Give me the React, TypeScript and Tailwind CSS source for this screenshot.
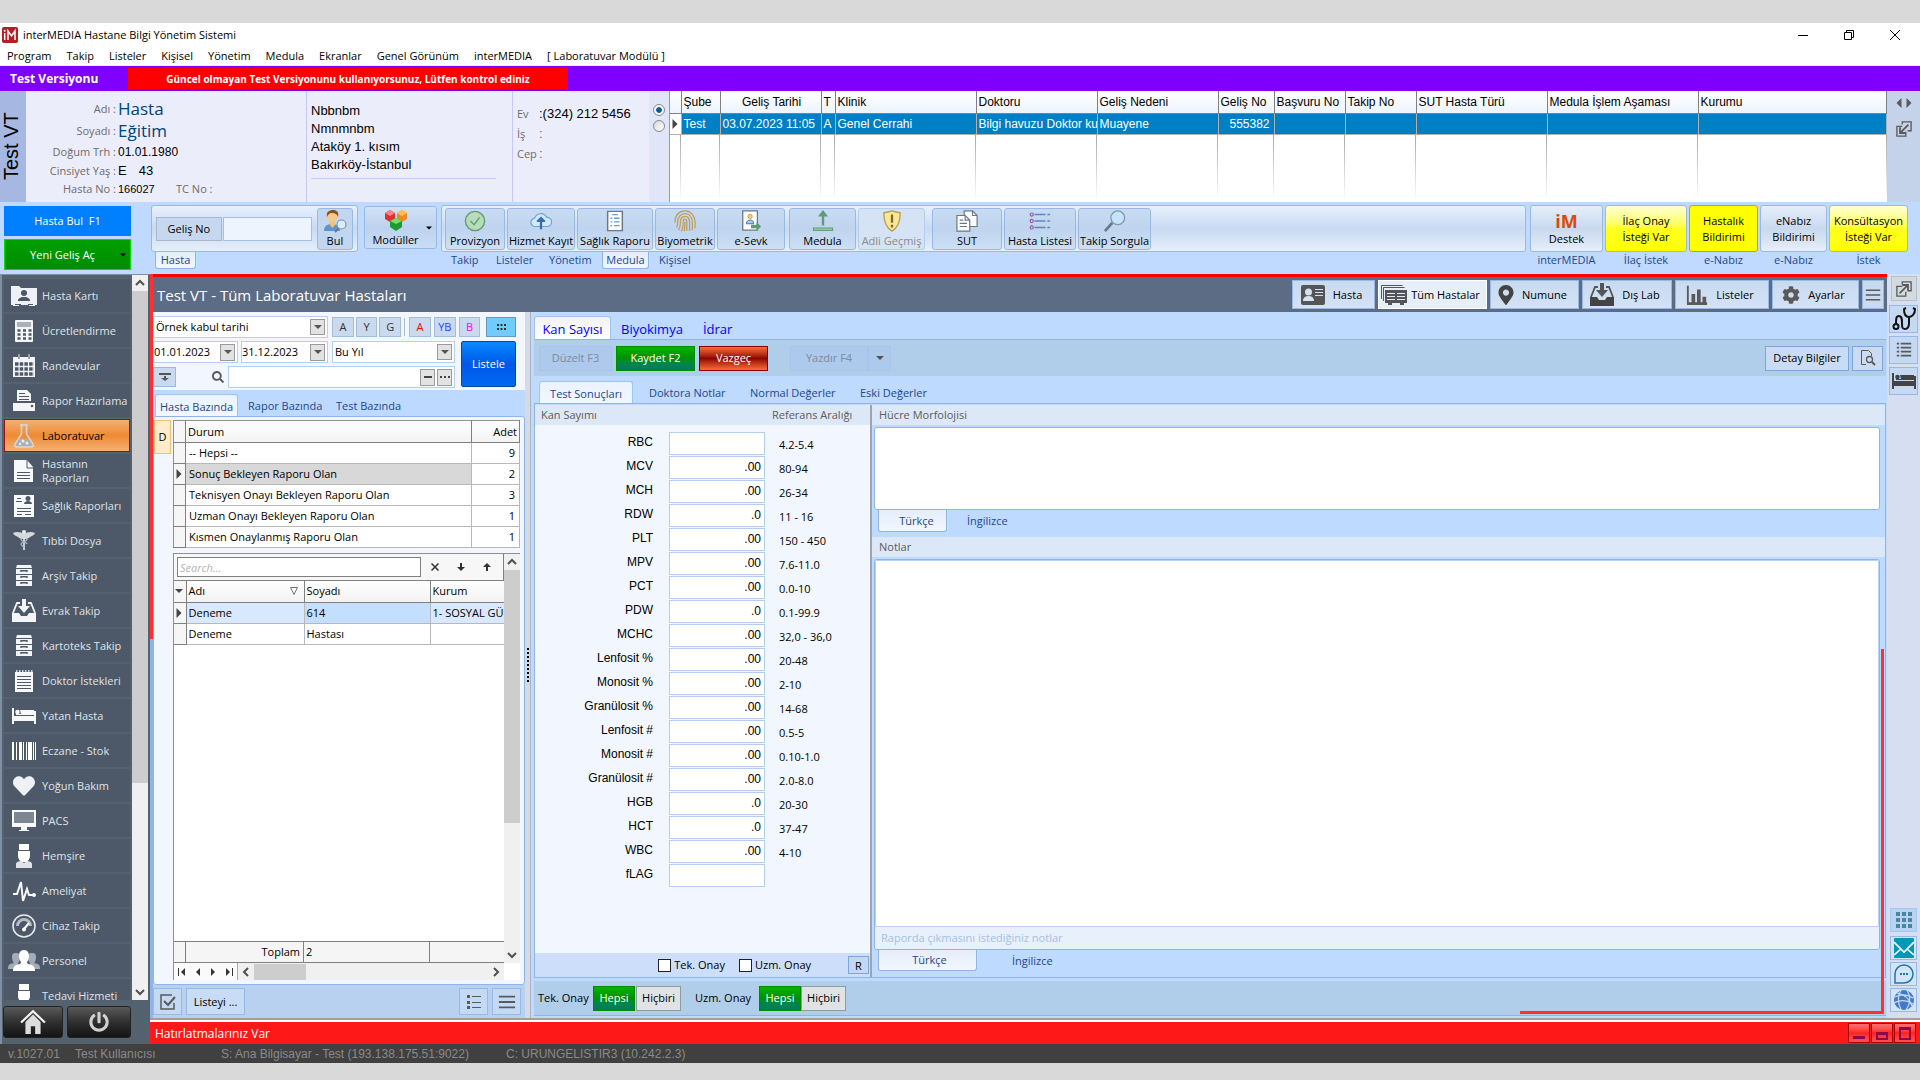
import { ReactNode, useState } from "react";
import clsx from "clsx";
import { FaCog, FaHeart, FaMapMarkerAlt, FaPowerOff, FaSearch } from "react-icons/fa";

const MENU = [
  "Program",
  "Takip",
  "Listeler",
  "Kişisel",
  "Yönetim",
  "Medula",
  "Ekranlar",
  "Genel Görünüm",
  "interMEDIA",
  "[ Laboratuvar Modülü ]",
];

const VISIT_COLUMNS = [
  { title: "", width: "w-[11px]" },
  { title: "Şube", width: "w-[39px]" },
  { title: "Geliş Tarihi", width: "w-[101px]" },
  { title: "T", width: "w-[14px]" },
  { title: "Klinik", width: "w-[141px]" },
  { title: "Doktoru", width: "w-[121px]" },
  { title: "Geliş Nedeni", width: "w-[121px]" },
  { title: "Geliş No", width: "w-[56px]" },
  { title: "Başvuru No", width: "w-[71px]" },
  { title: "Takip No", width: "w-[71px]" },
  { title: "SUT Hasta Türü", width: "w-[131px]" },
  { title: "Medula İşlem Aşaması", width: "w-[151px]" },
  { title: "Kurumu", width: "" },
];

const VISIT = ["", "Test", "03.07.2023 11:05", "A", "Genel Cerrahi", "Bilgi havuzu Doktor ku", "Muayene", "555382", "", "", "", "", ""];

const TESTS = [
  { name: "RBC", value: "", range: "4.2-5.4" },
  { name: "MCV", value: ".00", range: "80-94" },
  { name: "MCH", value: ".00", range: "26-34" },
  { name: "RDW", value: ".0", range: "11 - 16" },
  { name: "PLT", value: ".00", range: "150 - 450" },
  { name: "MPV", value: ".00", range: "7.6-11.0" },
  { name: "PCT", value: ".00", range: "0.0-10" },
  { name: "PDW", value: ".0", range: "0.1-99.9" },
  { name: "MCHC", value: ".00", range: "32,0 - 36,0" },
  { name: "Lenfosit %", value: ".00", range: "20-48" },
  { name: "Monosit %", value: ".00", range: "2-10" },
  { name: "Granülosit %", value: ".00", range: "14-68" },
  { name: "Lenfosit #", value: ".00", range: "0.5-5" },
  { name: "Monosit #", value: ".00", range: "0.10-1.0" },
  { name: "Granülosit #", value: ".00", range: "2.0-8.0" },
  { name: "HGB", value: ".0", range: "20-30" },
  { name: "HCT", value: ".0", range: "37-47" },
  { name: "WBC", value: ".00", range: "4-10" },
  { name: "fLAG", value: "", range: "" },
];

const STATUS_ROWS = [
  { name: "-- Hepsi --", count: 9 },
  { name: "Sonuç Bekleyen Raporu Olan", count: 2 },
  { name: "Teknisyen Onayı Bekleyen Raporu Olan", count: 3 },
  { name: "Uzman Onayı Bekleyen Raporu Olan", count: 1 },
  { name: "Kısmen Onaylanmış Raporu Olan", count: 1 },
];

/* ---------- icons ---------- */

function Svg({ children, className = "size-6", box = "0 0 24 24" }: { children: ReactNode; className?: string; box?: string }) {
  return (
    <svg viewBox={box} className={clsx("shrink-0", className)} fill="none" aria-hidden="true">
      {children}
    </svg>
  );
}

function Triangle({ dir = "down", className = "size-2" }: { dir?: "down" | "up" | "left" | "right"; className?: string }) {
  const d = { down: "M0 2h8L4 6z", up: "M0 6h8L4 2z", left: "M6 0v8L2 4z", right: "M2 0v8l4-4z" }[dir];
  return (
    <Svg box="0 0 8 8" className={className}>
      <path d={d} fill="currentColor" />
    </Svg>
  );
}

function Chevron({ dir, className = "size-2.5" }: { dir: "down" | "up" | "left" | "right"; className?: string }) {
  const d = { down: "M1 3l4 4 4-4", up: "M1 7l4-4 4 4", left: "M7 1L3 5l4 4", right: "M3 1l4 4-4 4" }[dir];
  return (
    <Svg box="0 0 10 10" className={className}>
      <path d={d} stroke="#505050" strokeWidth="2" />
    </Svg>
  );
}

const CabinetIcon = () => (
  <Svg>
    <path fill="#f3f5f8" d="M5 1h14l1 3v18H4V4z" />
    <path stroke="#4d5968" strokeWidth="1" d="M4 4.5h16M4 10.500h16M4 16.500h16" />
    <path stroke="#4d5968" strokeWidth="1.400" d="M9 8V6.700h6V8M9 14v-1.300h6V14M9 20v-1.300h6V20" />
  </Svg>
);

const NurseIcon = () => (
  <Svg>
    <path fill="#fff" d="M7 0h10v6H7zM6 7h12v5c0 3-2 5-3.500 6h-5C8 17 6 15 6 12z" />
    <path fill="#dfe3e8" d="M4 24v-4c0-2 3-3 5-3l3 2 3-2c2 0 5 1 5 3v4z" />
  </Svg>
);

const InboxIcon = ({ dark = false }: { dark?: boolean }) => (
  <Svg>
    <path fill={dark ? "#444" : "#f3f5f8"} d="M0 14h7l2 3h6l2-3h7v9H0z" />
    <path stroke={dark ? "#555" : "#f3f5f8"} strokeWidth="1.800" d="M1 14L5 4h3M23 14L19 4h-3" />
    <path fill={dark ? "#555" : "#f3f5f8"} d="M10 0h4v7h4l-6 7-6-7h4z" />
  </Svg>
);

const BedIcon = ({ dark = false }: { dark?: boolean }) => (
  <Svg>
    <path fill={dark ? "#444" : "#f8f9fb"} d="M0 4h2v8h20V7h2v13h-2v-3H2v3H0z" />
    <circle cx="5.500" cy="8" r="2.300" fill={dark ? "#444" : "#f8f9fb"} />
    <path fill={dark ? "#444" : "#f8f9fb"} d="M8 6h14v5H4v-1h5z" />
    <path stroke={dark ? "#c5d9f2" : "#4d5968"} strokeWidth=".8" d="M2 11.500h20" />
  </Svg>
);

const BarsIcon = ({ className = "size-5" }: { className?: string }) => (
  <Svg box="0 0 20 20" className={className}>
    <path stroke="#5a5a5a" strokeWidth="2" d="M1 4h18M1 10h18M1 16h18" />
  </Svg>
);

const ListIcon = () => (
  <Svg box="0 0 20 20" className="size-4">
    <path stroke="#5a5a5a" strokeWidth="2" d="M1 2h3M1 7h3M1 12h3M1 17h3M6 2h13M6 7h13M6 12h13M6 17h13" />
  </Svg>
);

const WindowArrow = ({ out = false }: { out?: boolean }) => (
  <Svg box="0 0 18 18" className="size-4">
    <path stroke="#5a5a5a" strokeWidth="1.500" d="M7 4V1h10v10h-4M7 6H1v11h10v-5" />
    {out ? (
      <path stroke="#5a5a5a" strokeWidth="2" d="M4 14l9-9M7 4.500h6.500V11" />
    ) : (
      <path stroke="#5a5a5a" strokeWidth="2" d="M14 4l-9 9M4.500 7v6.500H11" />
    )}
  </Svg>
);

const NAV: { label: string; icon: ReactNode; active?: boolean }[] = [
  {
    label: "Hasta Kartı",
    icon: (
      <Svg className="h-6 w-[26px]" box="0 0 26 24">
        <path fill="#eef1f6" d="M0 2h8l2 2h16v17H0z" />
        <circle cx="13" cy="9" r="3" fill="#4d5968" />
        <path fill="#4d5968" d="M7 17c0-3 2-3 4-4h4c2 1 4 1 4 4zM4 20h6v1H4zM17 20h5v1h-5z" />
        <path fill="#eef1f6" d="M2 21h6v1H2zM18 21h6v1h-6z" />
      </Svg>
    ),
  },
  {
    label: "Ücretlendirme",
    icon: (
      <Svg>
        <rect x="3" y="1" width="18" height="22" rx="1" fill="#f3f5f8" />
        <rect x="5" y="3" width="14" height="5" fill="#a8b0ba" />
        <path stroke="#4d5968" strokeWidth="2.500" strokeDasharray="3 2.500" d="M5.500 11.500h14M5.500 15.500h14M5.500 19.500h14" />
      </Svg>
    ),
  },
  {
    label: "Randevular",
    icon: (
      <Svg>
        <path fill="#f3f5f8" d="M1 3h22v20H1z" />
        <path stroke="#9aa4b0" strokeWidth="2" d="M7 0v5M17 0v5" />
        <path stroke="#4d5968" strokeWidth="3.500" strokeDasharray="3.500 1.200" d="M3 10h19M3 15h19M3 20h19" />
      </Svg>
    ),
  },
  {
    label: "Rapor Hazırlama",
    icon: (
      <Svg>
        <path fill="#f3f5f8" d="M5 1h10l4 4v7H5zM1 14h22v8H1z" />
        <path stroke="#4d5968" d="M7 4.500h6M7 7.500h10M7 10.500h10" />
        <circle cx="20" cy="17" r="1.300" fill="#4d5968" />
      </Svg>
    ),
  },
  {
    label: "Laboratuvar",
    active: true,
    icon: (
      <Svg>
        <path stroke="#d5d9de" strokeWidth="1.500" d="M8 1h8M9.500 1v9L3 20c-1 2 0 3 2 3h14c2 0 3-1 2-3l-6.500-10V1" />
        <path fill="#aab0b8" d="M7 15h10l3 6c0 1-1 1-2 1H6c-1 0-2 0-2-1z" />
        <circle cx="11" cy="17" r="1.500" fill="#eee" />
        <circle cx="15" cy="19" r="1.500" fill="#eee" />
        <circle cx="8" cy="20" r="1.200" fill="#eee" />
      </Svg>
    ),
  },
  {
    label: "Hastanın Raporları",
    icon: (
      <Svg>
        <path fill="#f8f9fb" d="M2 1h13l6 7v15H2z" />
        <path stroke="#4d5968" d="M15 1v8h6M5 13.500h13M5 16.500h13M5 19.500h13" />
      </Svg>
    ),
  },
  {
    label: "Sağlık Raporları",
    icon: (
      <Svg>
        <path fill="#f8f9fb" d="M2 1h20v22H2z" />
        <circle cx="16" cy="4.500" r="2.500" fill="#4d5968" />
        <path fill="#4d5968" d="M12 10c0-2 2-3 4-3s4 1 4 3z" />
        <path stroke="#4d5968" d="M5 4.500h4M4 7.500h6M5 14.500h14M5 17.500h14M5 20.500h5M13 20.500h6" />
      </Svg>
    ),
  },
  {
    label: "Tıbbi Dosya",
    icon: (
      <Svg>
        <path fill="#d5d9de" d="M1 4c4-2 8-1 11 1 3-2 7-3 11-1-1 3-4 3-5 4-2 2-4 2-6 2s-4 0-6-2C5 7 2 7 1 4z" />
        <path stroke="#d5d9de" strokeWidth="1.800" d="M12 4v17" />
        <path stroke="#aeb5be" strokeWidth="1.300" d="M9 10c0 3 6 3 6 5M15 10c0 3-6 3-6 5 0 2 3 2 3 4" />
        <circle cx="12" cy="3" r="2" fill="#eceef1" />
      </Svg>
    ),
  },
  { label: "Arşiv Takip", icon: <CabinetIcon /> },
  { label: "Evrak Takip", icon: <InboxIcon /> },
  { label: "Kartoteks Takip", icon: <CabinetIcon /> },
  {
    label: "Doktor İstekleri",
    icon: (
      <Svg>
        <path fill="#f8f9fb" d="M3 3h18v20H3z" />
        <path stroke="#f8f9fb" strokeWidth="1.500" strokeDasharray="1.500 1.500" d="M4 2h17" />
        <path stroke="#4d5968" d="M5 7.500h14M5 10.500h14M5 13.500h14M5 16.500h14M5 19.500h14" />
      </Svg>
    ),
  },
  { label: "Yatan Hasta", icon: <BedIcon /> },
  {
    label: "Eczane - Stok",
    icon: (
      <Svg>
        <path fill="#fff" d="M0 3h2v18H0zM4 3h1v18H4zM7 3h3v18H7zM11 3h1v18h-1zM14 3h1v18h-1zM16 3h4v18h-4zM21 3h1v18h-1zM23 3h1v18h-1z" />
      </Svg>
    ),
  },
  { label: "Yoğun Bakım", icon: <FaHeart className="size-[22px] text-[#eef1f6]" /> },
  {
    label: "PACS",
    icon: (
      <Svg>
        <path fill="#f8f9fb" d="M0 1h24v17h-9v3h2v1H7v-1h2v-3H0z" />
        <path fill="#7d8794" d="M2 3h20v11H2z" />
      </Svg>
    ),
  },
  { label: "Hemşire", icon: <NurseIcon /> },
  {
    label: "Ameliyat",
    icon: (
      <Svg>
        <path stroke="#f8f9fb" strokeWidth="2" d="M1 15h4l4-12 2 19 4-12 2 6h6" />
        <circle cx="22" cy="16" r="2" fill="#f8f9fb" />
      </Svg>
    ),
  },
  {
    label: "Cihaz Takip",
    icon: (
      <Svg>
        <circle cx="12" cy="12" r="11" stroke="#e6e9ee" strokeWidth="1.600" />
        <path fill="#b4bbc4" d="M4 12a8 8 0 0 1 16 0h-3a5 5 0 0 0-10 0z" />
        <path stroke="#fff" strokeWidth="2" d="M12 15l5-6" />
        <circle cx="12" cy="15.500" r="2" fill="#fff" />
      </Svg>
    ),
  },
  {
    label: "Personel",
    icon: (
      <Svg className="h-6 w-8" box="0 0 32 24">
        <path fill="#a4acb8" d="M4 8c0-3 1-4 4-4s4 1 4 4-1 5-2 6l2 6H0c0-5 2-5 6-6-1-1-2-3-2-6zM28 8c0-3-1-4-4-4s-4 1-4 4 1 5 2 6l-2 6h12c0-5-2-5-6-6 1-1 2-3 2-6z" />
        <path fill="#fff" d="M11 7c0-4 2-6 5-6s5 2 5 6c0 3-1 5-2 6 0 2 2 2 5 3 2 1 3 3 3 6H5c0-3 1-5 3-6 3-1 5-1 5-3-1-1-2-3-2-6z" />
      </Svg>
    ),
  },
  { label: "Tedavi Hizmeti", icon: <NurseIcon /> },
];

/* ---------- shared parts ---------- */

function Scroller({ thumb, className, dir = "col" }: { thumb: string; className?: string; dir?: "col" | "row" }) {
  const vertical = dir === "col";
  return (
    <div className={clsx("flex items-center justify-between bg-[#f0f0f0]", vertical ? "w-4 flex-col" : "h-4", className)}>
      <span className="flex size-4 shrink-0 items-center justify-center">
        <Chevron dir={vertical ? "up" : "left"} />
      </span>
      <div className={clsx("flex-1", vertical ? "w-full" : "h-full")}>
        <div className={clsx("bg-[#cdcdcd]", thumb)} />
      </div>
      <span className="flex size-4 shrink-0 items-center justify-center">
        <Chevron dir={vertical ? "down" : "right"} />
      </span>
    </div>
  );
}

function RibbonButton({ label, width, icon, disabled }: { label: string; width: string; icon: ReactNode; disabled?: boolean }) {
  return (
    <button
      disabled={disabled}
      className={clsx(
        "flex h-[42px] shrink-0 flex-col items-center justify-between rounded-[3px] border pt-px whitespace-nowrap",
        disabled
          ? "border-[#b5cdec] bg-[#d5e3f4] text-[#8b8b8b]"
          : "border-[#98b9e6] bg-linear-to-b from-[#c8dbf2] via-[#bfd4ee] to-[#cbdff6]",
        width,
      )}
    >
      {icon}
      <span className="leading-4">{label}</span>
    </button>
  );
}

function BottomTab({ children, active, className }: { children: ReactNode; active?: boolean; className: string }) {
  return (
    <button
      className={clsx(
        "rounded-b-[3px] text-[#1e4691]",
        active && "border border-t-0 border-[#8fb4e8] bg-linear-to-b from-[#e4edf9] to-[#f2f7ff] shadow-[1px_0_0_#b0ecff]",
        className,
      )}
    >
      {children}
    </button>
  );
}

function TopTab({ children, active, className }: { children: ReactNode; active?: boolean; className?: string }) {
  return (
    <button
      className={clsx(
        "rounded-t-[3px] pt-0.5",
        active && "border border-b-0 border-[#9cc4f4] bg-linear-to-b from-[#e9f3ff] to-[#f2f7ff]",
        className,
      )}
    >
      {children}
    </button>
  );
}

function DropArrow({ label }: { label: string }) {
  return (
    <button
      aria-label={label}
      className="flex h-[17px] w-[15px] shrink-0 items-center justify-center border border-[#9a9a9a] bg-[#e2e2e2] text-[#555]"
    >
      <Triangle />
    </button>
  );
}

function DateBox({ label, value, className }: { label: string; value: string; className: string }) {
  return (
    <div className={clsx("flex h-[22px] items-center border border-[#b5cff2] bg-white pr-[2px]", className)}>
      <input aria-label={label} defaultValue={value} className="min-w-0 flex-1 outline-none" />
      <DropArrow label={label + " seç"} />
    </div>
  );
}

function SelectBox({ label, options, className }: { label: string; options: string[]; className: string }) {
  return (
    <div className={clsx("relative h-[22px] border border-[#b5cff2] bg-white", className)}>
      <select aria-label={label} className="h-full w-full appearance-none pl-0.5 outline-none">
        {options.map((o) => (
          <option key={o}>{o}</option>
        ))}
      </select>
      <span className="pointer-events-none absolute inset-y-0.5 right-0.5 flex w-[15px] items-center justify-center border border-[#9a9a9a] bg-[#e2e2e2] text-[#555]">
        <Triangle />
      </span>
    </div>
  );
}

/* ---------- top area ---------- */

function TitleBar() {
  return (
    <header className="bg-white text-black">
      <div className="flex h-[23px] items-center">
        <Svg box="0 0 16 16" className="ml-0.5 size-4">
          <rect width="16" height="16" rx="2" fill="#b81c22" />
          <path stroke="#fff" strokeWidth="1.500" d="M2.700 6v7M6 13V4l3.500 5L13 4v9" />
          <circle cx="2.700" cy="3.700" r="1" fill="#fff" />
        </Svg>
        <h1 className="ml-[5px] flex-1">interMEDIA Hastane Bilgi Yönetim Sistemi</h1>
        <div className="mr-5 flex gap-9">
          <button aria-label="Küçült">
            <Svg box="0 0 10 10" className="size-2.5"><path stroke="#000" d="M0 5.500h10" /></Svg>
          </button>
          <button aria-label="Önceki boyut">
            <Svg box="0 0 10 10" className="size-2.5"><path stroke="#000" d="M.5 2.500h7v7h-7zM2.500 2.500v-2h7v7h-2" /></Svg>
          </button>
          <button aria-label="Kapat">
            <Svg box="0 0 10 10" className="size-2.5"><path stroke="#000" d="M0 0l10 10M10 0L0 10" /></Svg>
          </button>
        </div>
      </div>
      <nav className="flex h-5 items-center gap-[15px] border-b border-[#f0f0f0] pl-[7px]">
        {MENU.map((m) => (
          <button key={m}>{m}</button>
        ))}
      </nav>
      <div className="flex h-[25px] items-center bg-[#8000ff] font-bold text-white">
        <span className="w-32 pl-2.5 text-xs">Test Versiyonu</span>
        <span className="flex h-[21px] w-[440px] items-center justify-center bg-[#ff0000] text-[10px]">
          Güncel olmayan Test Versiyonunu kullanıyorsunuz, Lütfen kontrol ediniz
        </span>
      </div>
    </header>
  );
}

function PatientBar() {
  return (
    <section className="flex h-[111px] shrink-0 bg-[#ecedfb] font-['Liberation_Sans',Arial,sans-serif]">
      <div className="flex w-[26px] shrink-0 rotate-180 items-center justify-center bg-[#a6b7e2] pl-1 text-xl leading-none text-black [writing-mode:vertical-rl]">
        Test VT
      </div>
      <dl className="grid w-[281px] shrink-0 grid-cols-[90px_56px_1fr] grid-rows-[22px_22px_20px_18px_18px] items-center gap-x-0.5 border-r border-[#c8c8f8] pt-[7px] text-xs whitespace-nowrap text-black">
        <dt className="text-right font-['Open_Sans',sans-serif] text-[11px] text-[#6c6c6c]">Adı :</dt>
        <dd className="col-span-2 font-['Open_Sans',sans-serif] text-[17px] text-[#00427c]">Hasta</dd>
        <dt className="text-right font-['Open_Sans',sans-serif] text-[11px] text-[#6c6c6c]">Soyadı :</dt>
        <dd className="col-span-2 font-['Open_Sans',sans-serif] text-[17px] text-[#00427c]">Eğitim</dd>
        <dt className="text-right font-['Open_Sans',sans-serif] text-[11px] text-[#6c6c6c]">Doğum Trh :</dt>
        <dd className="col-span-2">01.01.1980</dd>
        <dt className="text-right font-['Open_Sans',sans-serif] text-[11px] text-[#6c6c6c]">Cinsiyet Yaş :</dt>
        <dd className="col-span-2 flex gap-3 text-[13px]">
          <span>E</span>
          <span>43</span>
        </dd>
        <dt className="text-right font-['Open_Sans',sans-serif] text-[11px] text-[#6c6c6c]">Hasta No :</dt>
        <dd className="text-[11px]">166027</dd>
        <dt className="font-['Open_Sans',sans-serif] text-[11px] text-[#6c6c6c]">TC No :</dt>
      </dl>
      <address className="w-[206px] shrink-0 border-r border-[#c8c8f8] pt-[11px] pr-4 pl-1 text-[13px] leading-[18px] text-black not-italic">
        <p>Nbbnbm</p>
        <p>Nmnmnbm</p>
        <p>Ataköy 1. kısım</p>
        <p className="border-b border-[#c8c8f8] pb-1">Bakırköy-İstanbul</p>
      </address>
      <dl className="grid w-[136px] shrink-0 grid-cols-[22px_1fr] content-start pt-[13px] pl-1 text-[13px] leading-5 text-black">
        <dt className="font-['Open_Sans',sans-serif] text-[11px] leading-5 text-[#6c6c6c]">Ev</dt>
        <dd>:(324) 212 5456</dd>
        <dt className="font-['Open_Sans',sans-serif] text-[11px] leading-5 text-[#6c6c6c]">İş</dt>
        <dd className="text-[#6c6c6c]">:</dd>
        <dt className="font-['Open_Sans',sans-serif] text-[11px] leading-5 text-[#6c6c6c]">Cep</dt>
        <dd className="text-[#6c6c6c]">:</dd>
      </dl>
      <div className="flex w-5 shrink-0 flex-col items-center gap-1 bg-[#e0e5f7] pt-[13px]">
        {["Açık gelişler", "Tüm gelişler"].map((l, i) => (
          <input
            key={l}
            type="radio"
            name="visits"
            aria-label={l}
            defaultChecked={i === 0}
            className="size-3 appearance-none rounded-full border border-[#8a8a8a] bg-linear-to-br from-[#d8d8d8] to-white checked:bg-[radial-gradient(#0a5f96_35%,#f4f4f4_45%)]"
          />
        ))}
      </div>
      <div className="min-w-0 flex-1 border-l border-[#9a9a9a] bg-white">
        <table className="h-[109px] w-full table-fixed border-collapse text-left text-xs text-black">
          <thead>
            <tr className="h-[22px]">
              {VISIT_COLUMNS.map((c) => (
                <th
                  key={c.title}
                  className={clsx(
                    "overflow-hidden border-r border-b border-[#808080] bg-linear-to-b from-white to-[#edf4fc] p-0 pl-0.5 font-normal whitespace-nowrap",
                    c.title === "Geliş Tarihi" && "text-center",
                    c.width,
                  )}
                >
                  {c.title}
                </th>
              ))}
            </tr>
          </thead>
          <tbody>
            <tr className="h-[21px] bg-[#0080c4] text-white">
              {VISIT.map((v, i) => (
                <td
                  key={i}
                  className={clsx(
                    "overflow-hidden border-r border-b border-[#b0b0b0] p-0 whitespace-nowrap",
                    i === 0 ? "bg-white text-[#444]" : "pl-0.5",
                    i === 7 && "pr-1 text-right",
                  )}
                >
                  {i === 0 ? <Triangle dir="right" className="size-2.5" /> : v}
                </td>
              ))}
            </tr>
            <tr>
              {VISIT.map((_, i) => (
                <td
                  key={i}
                  className="bg-linear-to-b from-[#a8a8a8] to-white bg-size-[1px_100%] bg-right bg-no-repeat p-0"
                />
              ))}
            </tr>
          </tbody>
        </table>
      </div>
      <div className="flex w-[33px] shrink-0 flex-col items-center gap-2 bg-[#c5d3ea] pt-1 text-[#5a5a5a]">
        <button aria-label="Genişlet" className="flex h-4 items-center">
          <Triangle dir="left" className="size-2.5" />
          <Triangle dir="right" className="size-2.5" />
        </button>
        <button aria-label="Pencereyi küçült" className="mt-0.5">
          <WindowArrow />
        </button>
      </div>
    </section>
  );
}

const ribbonTools: { label: string; width: string; icon: ReactNode; gap?: string; disabled?: boolean }[] = [
  {
    label: "Provizyon",
    width: "w-[60px]",
    icon: (
      <Svg className="size-[22px]">
        <circle cx="12" cy="12" r="10.500" fill="#b8dcb8" stroke="#5c9c78" strokeWidth="1.500" />
        <path stroke="#5c9c78" strokeWidth="1.500" d="M7 12l4 4 6-8" />
      </Svg>
    ),
  },
  {
    label: "Hizmet Kayıt",
    width: "w-[68px]",
    icon: (
      <Svg className="size-[22px]">
        <path fill="#cfeafc" stroke="#6f9fd4" strokeWidth="1.300" d="M6 18a4.500 4.500 0 0 1-1-9 7 7 0 0 1 13-1 5 5 0 0 1 1 10z" />
        <path stroke="#3a6ea8" strokeWidth="2.500" d="M12 21V11" />
        <path fill="#3a6ea8" d="M7 12l5-5 5 5-1 1H8z" />
      </Svg>
    ),
  },
  {
    label: "Sağlık Raporu",
    width: "w-[76px]",
    icon: (
      <Svg className="size-[22px]">
        <path fill="#fff" stroke="#6c7888" strokeWidth="1.600" d="M4 1.500h16v21H4z" />
        <path stroke="#5b9de4" strokeWidth="1.500" d="M9 5h6M7 9h2M11 9h6M7 13h2M11 13h6M7 17h2M11 17h6" />
      </Svg>
    ),
  },
  {
    label: "Biyometrik",
    width: "w-[60px]",
    icon: (
      <Svg className="size-[22px]">
        <path
          stroke="#c29a55"
          strokeWidth="1.300"
          d="M1 14C1 5 6 1 12 1s11 5 11 13v6M3 19c1-2 1-4 1-6 0-5 3-9 8-9s8 4 8 10v8M5 22c2-3 2-6 2-9 0-4 2-6 5-6s5 2 5 7v9M8 23c2-3 2-6 2-10 0-2 1-3 2-3s2 1 2 4v9M11 23c1-3 1-6 1-10"
        />
      </Svg>
    ),
  },
  {
    label: "e-Sevk",
    width: "w-[68px]",
    icon: (
      <Svg className="size-[22px]">
        <path fill="#fff" stroke="#6c7888" strokeWidth="1.400" d="M3 1h16v21H3z" />
        <circle cx="11" cy="7" r="2.300" fill="#f4d08a" stroke="#c29a3a" />
        <path fill="#a8ccf2" stroke="#3a6ea8" d="M7 15c0-3 2-4 4-4s4 1 4 4z" />
        <path fill="#5c9c78" d="M12 16h6v-3l5 5-5 5v-3h-6z" />
      </Svg>
    ),
  },
  {
    label: "Medula",
    width: "w-[67px]",
    gap: "ml-0.5",
    icon: (
      <Svg className="size-[22px]">
        <path fill="#5c9c78" d="M10.700 6h2.600v11h-2.600zM12 0l5.500 7h-11zM1 19h22v4H1z" />
        <path fill="#8cc4a0" d="M2 20h20v2H2z" />
      </Svg>
    ),
  },
  {
    label: "Adli Geçmiş",
    width: "w-[67px]",
    disabled: true,
    icon: (
      <Svg className="size-[22px]">
        <path fill="#fbe793" stroke="#b5a05a" strokeWidth="1.500" d="M12 1c3 1 6 2 9 2 0 9-2 16-9 20C5 19 3 12 3 3c3 0 6-1 9-2z" />
        <path stroke="#7a6a3a" strokeWidth="2.500" d="M12 5v9M12 16v3" />
      </Svg>
    ),
  },
  {
    label: "SUT",
    width: "w-[70px]",
    gap: "ml-[5px]",
    icon: (
      <Svg className="size-[22px]">
        <path fill="#fff" stroke="#6c7888" strokeWidth="1.300" d="M9 1h9l5 5v12H9z" />
        <path fill="#fff" stroke="#6c7888" strokeWidth="1.300" d="M1 6h9l5 5v12H1z" />
        <path stroke="#6c7888" strokeWidth="1.300" d="M10 6v5h5M18 1v5h5M4 11h4M4 14.500h8M4 18h8" />
      </Svg>
    ),
  },
  {
    label: "Hasta Listesi",
    width: "w-[72px]",
    icon: (
      <Svg className="size-[22px]">
        <path stroke="#5f86bc" strokeWidth="1.600" d="M6 5h12M20 5h3M6 12h12M20 12h3M6 19h12M20 19h3" />
        <circle cx="3" cy="5" r="1.700" stroke="#9a5aa0" strokeWidth="1.300" />
        <circle cx="3" cy="12" r="1.700" stroke="#9a5aa0" strokeWidth="1.300" />
        <circle cx="3" cy="19" r="1.700" stroke="#9a5aa0" strokeWidth="1.300" />
      </Svg>
    ),
  },
  {
    label: "Takip Sorgula",
    width: "w-[73px]",
    icon: (
      <Svg className="size-[22px]">
        <path stroke="#6c7888" strokeWidth="3" d="M1 23l8-9" />
        <circle cx="15" cy="8.500" r="7.500" fill="#c4e4fa" stroke="#8296ae" strokeWidth="1.400" />
      </Svg>
    ),
  },
];

const alerts = [
  { top: "", text: "Destek", foot: "interMEDIA", width: "w-[73px]", look: "border-[#98b9e6] bg-linear-to-b from-[#e6effa] via-[#c8d9ee] to-[#e6eef9]" },
  { top: "İlaç Onay", text: "İsteği Var", foot: "İlaç İstek", width: "w-[82px]", look: "border-[#98b9e6] bg-linear-to-b from-[#ffffd0] via-[#ffff20] to-[#ffff00]" },
  { top: "Hastalık", text: "Bildirimi", foot: "e-Nabız", width: "w-[69px]", look: "border-[#f08a30] bg-[#ffff00]" },
  { top: "eNabız", text: "Bildirimi", foot: "e-Nabız", width: "w-[67px]", look: "border-[#98b9e6] bg-linear-to-b from-[#e6effa] via-[#c8d9ee] to-[#e6eef9]" },
  { top: "Konsültasyon", text: "İsteği Var", foot: "İstek", width: "w-[79px]", look: "border-[#98b9e6] bg-linear-to-b from-[#ffffd0] via-[#ffff20] to-[#ffff00]" },
];

function Ribbon() {
  return (
    <section className="flex h-[72px] shrink-0 bg-[#c0daff] pt-[3px] pl-1 text-black">
      <div className="mt-px mr-5 flex w-[127px] shrink-0 flex-col gap-[3px] text-white">
        <button className="h-[30px] bg-[#0080ff]">Hasta Bul&nbsp; F1</button>
        <button className="flex h-[31px] items-center border border-[#00e000] bg-linear-to-b from-[#00a000] to-[#008c00] pr-1">
          <span className="flex-1">Yeni Geliş Aç</span>
          <Triangle className="size-1.5 text-black" />
        </button>
      </div>
      <div className="mr-1.5 shrink-0">
        <div className="flex h-[47px] w-[207px] items-center rounded-[3px] border border-[#98b9e6] bg-linear-to-b from-[#e8f1fd] via-[#c8daf2] to-[#e6effa] px-1">
          <label htmlFor="visit-no" className="flex h-6 w-[67px] items-center justify-center border border-[#a8b8c8] bg-[#c5d8f0]">
            Geliş No
          </label>
          <input id="visit-no" className="ml-px h-6 w-[89px] border border-[#a8c0e0] bg-[#edf4fd] px-1 outline-none" />
          <button className="ml-[5px] flex h-[42px] w-[37px] flex-col items-center justify-between rounded-[3px] border border-[#98b9e6] bg-[#c2d6f0]">
            <Svg className="size-6">
              <path fill="#5f94d0" d="M1 22c0-5 3-7 8-7s8 2 8 7z" />
              <path fill="#f0c078" d="M7 11h5v5l-2.500 3L7 16z" />
              <circle cx="9.500" cy="8" r="5" fill="#f4c98a" />
              <path fill="#8a5220" d="M4 8c-1-5 2-7 6-7s6 2 5 7c-1-3-3-4-6-4S5 6 4 8z" />
              <path stroke="#6c7888" strokeWidth="2" d="M12 23l4-4" />
              <circle cx="18.500" cy="15.500" r="4.500" fill="#d8ecfb" stroke="#7d93b0" strokeWidth="1.200" />
            </Svg>
            <span className="leading-4">Bul</span>
          </button>
        </div>
        <BottomTab active className="ml-1 h-[17px] w-[41px]">Hasta</BottomTab>
      </div>
      <button className="mt-px mr-1 flex h-[43px] w-[73px] shrink-0 items-center rounded-[3px] border border-[#98b9e6] bg-linear-to-b from-[#d2e2f6] via-[#bdd2ee] to-[#c8dcf4]">
        <span className="flex flex-1 flex-col items-center">
          <Svg className="size-6">
            <path fill="#e23030" d="M1 5l5-3 5 3v6l-5 3-5-3z" />
            <path fill="#ff8080" d="M1 5l5-3 5 3-5 3z" />
            <path fill="#f08a20" d="M13 5l5-3 5 3v6l-5 3-5-3z" />
            <path fill="#ffc050" d="M13 5l5-3 5 3-5 3z" />
            <path fill="#1f9a30" d="M6 13l6-3 6 3v6l-6 4-6-4z" />
            <path fill="#7ada6a" d="M6 13l6-3 6 3-6 3z" />
          </Svg>
          <span className="leading-4">Modüller</span>
        </span>
        <Triangle className="mr-1 size-1.5" />
      </button>
      <div className="min-w-0 flex-1">
        <div className="flex h-[47px] items-center gap-0.5 rounded-[3px] border border-[#98b9e6] bg-linear-to-b from-[#e8f1fd] via-[#c8daf2] to-[#e6effa] pl-[3px]">
          {ribbonTools.map(({ gap, ...t }) => (
            <div key={t.label} className={gap}>
              <RibbonButton {...t} />
            </div>
          ))}
        </div>
        <div className="flex items-start text-[#1e4691]">
          <button className="ml-2.5 h-4 w-[45px] text-left">Takip</button>
          <button className="h-4 w-[53px] text-left">Listeler</button>
          <button className="h-4 w-[53px] text-left">Yönetim</button>
          <BottomTab active className="h-[17px] w-[47px]">Medula</BottomTab>
          <button className="ml-2.5 h-4">Kişisel</button>
        </div>
      </div>
      <div className="mr-3 ml-1 flex shrink-0 gap-0.5">
        {alerts.map((a, i) => (
          <div key={i} className={clsx("flex flex-col items-center", a.width)}>
            <button
              className={clsx(
                "flex h-[47px] w-full flex-col items-center justify-center rounded-[3px] border leading-4 whitespace-nowrap",
                a.look,
              )}
            >
              {a.top ? <span>{a.top}</span> : <span className="text-lg leading-5 font-bold text-[#e04800]">iM</span>}
              <span>{a.text}</span>
            </button>
            <span className="leading-4 text-[#1e4691]">{a.foot}</span>
          </div>
        ))}
      </div>
    </section>
  );
}

/* ---------- work area ---------- */

function Sidebar() {
  return (
    <aside className="flex w-[150px] shrink-0 flex-col border-t border-l-2 border-[#8090a4] bg-[#54616f]">
      <div className="flex min-h-0 flex-1">
        <nav className="flex min-w-0 flex-1 flex-col gap-0.5 overflow-hidden pt-1 pr-0.5 pl-0.5">
          {NAV.map((n) => (
            <button
              key={n.label}
              className={clsx(
                "flex h-[33px] shrink-0 items-center border text-left leading-[14px]",
                n.active
                  ? "border-[#a01010] bg-linear-to-b from-[#f2b070] via-[#ef8a32] to-[#f2b070] text-black"
                  : "border-[#4d5968] bg-[#4d5968] text-[#dfe3e8]",
              )}
            >
              <span className="flex w-[37px] shrink-0 justify-center">{n.icon}</span>
              <span className={clsx(n.label.includes("Hastanın") ? "w-16" : "whitespace-nowrap")}>{n.label}</span>
            </button>
          ))}
        </nav>
        <Scroller thumb="h-[71%] w-full" className="mr-0.5" />
      </div>
      <div className="flex h-11 items-center gap-1 pb-px pl-px">
        <button aria-label="Ana sayfa" className="flex h-8 w-[60px] items-center justify-center rounded-[3px] border border-[#222] bg-linear-to-b from-[#5a5a5a] via-[#303030] to-[#141414]">
          <Svg className="size-[26px]">
            <path fill="#dcdcdc" d="M5 12l7-7 7 7v11h-5v-7h-4v7H5z" />
            <path stroke="#f4f4f4" strokeWidth="2" d="M1 12.500L12 2l11 10.500" />
          </Svg>
        </button>
        <button aria-label="Çıkış" className="flex h-8 w-16 items-center justify-center rounded-[3px] border border-[#222] bg-linear-to-b from-[#5a5a5a] via-[#303030] to-[#141414]">
          <FaPowerOff className="size-5 text-[#d0d0d0]" />
        </button>
      </div>
    </aside>
  );
}

const modules = [
  {
    label: "Hasta",
    width: "w-[83px]",
    icon: (
      <Svg>
        <rect y="2" width="24" height="20" rx="2" fill="#555" />
        <circle cx="7.500" cy="9" r="3.500" fill="#d6e2f2" />
        <path fill="#d6e2f2" d="M2 18c0-4 3-5 5.500-5s5.500 1 5.500 5zM14 6h8v1h-8zM14 9h8v1h-8zM14 12h8v1h-8z" />
      </Svg>
    ),
  },
  {
    label: "Tüm Hastalar",
    width: "w-[109px]",
    active: true,
    icon: (
      <Svg box="0 0 26 24" className="h-6 w-[26px]">
        <path stroke="#555" d="M.5 16V2.500h21M2.500 18V4.500h21" />
        <path fill="#555" d="M4 7h22v13h-3v2h-4v-2h-8v2H7v-2H4z" />
        <path stroke="#e4ecf8" d="M6 10.500h8M6 13.500h8M6 16.500h8M16 10.500h8M16 13.500h8M16 16.500h8" />
      </Svg>
    ),
  },
  { label: "Numune", width: "w-[89px]", icon: <FaMapMarkerAlt className="h-5 w-4 text-[#444]" /> },
  { label: "Dış Lab", width: "w-[90px]", icon: <InboxIcon dark /> },
  {
    label: "Listeler",
    width: "w-[94px]",
    icon: (
      <Svg className="size-[22px]">
        <path fill="#5a5a5a" d="M1 2h2v20H1zM1 20h22v3H1zM6 11h4v9H6zM12 6h4v14h-4zM18 14h4v6h-4z" />
      </Svg>
    ),
  },
  { label: "Ayarlar", width: "w-[87px]", icon: <FaCog className="size-[18px] text-[#5a5a5a]" /> },
];

function ModuleBar() {
  return (
    <div className="flex h-[38px] shrink-0 items-end bg-[#5d6c85] pr-[3px] pb-[3px]">
      <h2 className="flex-1 pb-0.5 pl-1 text-[15px] leading-6 text-white">Test VT - Tüm Laboratuvar Hastaları</h2>
      <div className="flex gap-[3px] text-black">
        {modules.map((m) => (
          <button
            key={m.label}
            className={clsx(
              "flex h-[29px] items-center justify-center border pr-1 whitespace-nowrap",
              m.active ? "gap-1 border-white bg-[#e6eefa]" : "gap-2 border-[#98b9e6] bg-linear-to-b from-[#c9daf0] to-[#d3e2f5]",
              m.width,
            )}
          >
            {m.icon}
            {m.label}
          </button>
        ))}
        <button aria-label="Menü" className="flex h-[29px] w-[22px] items-center justify-center border border-[#98b9e6] bg-[#c9daf0]">
          <BarsIcon className="size-4" />
        </button>
      </div>
    </div>
  );
}

const letters = [
  { t: "A", c: "text-[#333]" },
  { t: "Y", c: "text-[#333]" },
  { t: "G", c: "text-[#333]" },
  { t: "A", c: "text-[#ff0000]" },
  { t: "YB", c: "text-[#3040ff]" },
  { t: "B", c: "text-[#ff00ff]" },
];

function Filters() {
  return (
    <div className="grid h-[78px] shrink-0 grid-cols-[175px_123px_1fr] grid-rows-[22px_22px_22px] gap-x-1 gap-y-[3px] bg-[#f2f7ff] pt-1 pr-[9px] text-black">
      <SelectBox label="Tarih türü" options={["Örnek kabul tarihi", "Rapor tarihi"]} className="w-full" />
      <div className="col-span-2 flex items-center gap-px">
        {letters.map((l, i) => (
          <button
            key={i}
            className={clsx(
              "h-5 w-[22px] border border-[#a8bcd8] bg-[#c9d9ee]",
              i < 3 ? "mr-px" : "mr-[2px] last:mr-0",
              i === 3 && "ml-1.5 shadow-[-5px_0_0_-1px_#f2f7ff,-6px_0_0_-1px_#a8bcd8]",
              l.c,
            )}
          >
            {l.t}
          </button>
        ))}
        <button aria-label="Diğer" className="ml-[3px] flex h-5 w-[30px] items-center justify-center border border-[#6c98b8] bg-[#70ccff]">
          <Svg box="0 0 9 6" className="h-1.5 w-[9px]">
            <path fill="#333" d="M0 0h2v2H0zM3.500 0h2v2h-2zM7 0h2v2H7zM0 4h2v2H0zM3.500 4h2v2h-2zM7 4h2v2H7z" />
          </Svg>
        </button>
      </div>
      <div className="flex gap-[3px]">
        <DateBox label="Başlangıç" value="01.01.2023" className="w-[85px]" />
        <DateBox label="Bitiş" value="31.12.2023" className="w-[87px]" />
      </div>
      <SelectBox label="Dönem" options={["Bu Yıl", "Bu Ay", "Bugün"]} className="w-full" />
      <button className="row-span-2 h-[46px] w-[55px] justify-self-end rounded-[2px] border border-[#0048a0] bg-linear-to-b from-[#1088ff] via-[#0058e8] to-[#0068f0] text-white">
        Listele
      </button>
      <div className="col-span-2 flex items-center">
        <button aria-label="Filtrele" className="flex h-5 w-[23px] items-center justify-center border border-[#98b9e6] bg-[#c9daf0]">
          <Svg box="0 0 12 8" className="h-2 w-3">
            <path fill="#555" d="M0 0h12v2H0zM5 3h2v2h3L6 8 2 5h3z" />
          </Svg>
        </button>
        <FaSearch className="mr-1 ml-9 size-3 text-[#5a5a5a]" />
        <div className="flex h-[22px] flex-1 items-center gap-0.5 border border-[#b5cff2] bg-white pr-0.5 text-[#444]">
          <input aria-label="Hasta ara" className="min-w-0 flex-1 px-1 outline-none" />
          <button aria-label="Temizle" className="flex h-[17px] w-[15px] items-center justify-center border border-[#9a9a9a] bg-[#e2e2e2]">
            <Svg box="0 0 8 8" className="size-2"><path fill="#444" d="M0 3h8v2H0z" /></Svg>
          </button>
          <button aria-label="Seç" className="flex h-[17px] w-[15px] items-center justify-center border border-[#9a9a9a] bg-[#e2e2e2]">
            <Svg box="0 0 10 8" className="h-2 w-2.5"><path fill="#444" d="M0 3h2v2H0zM4 3h2v2H4zM8 3h2v2H8z" /></Svg>
          </button>
        </div>
      </div>
    </div>
  );
}

const gutter = "w-[12px] border-r border-b border-[#808080] bg-[#f6f6f6] p-0 text-[#444]";

function PatientList() {
  const [selected, setSelected] = useState(1);

  return (
    <div className="flex w-[372px] shrink-0 flex-col bg-[#bed9ff]">
      <Filters />
      <div className="flex h-[26px] shrink-0 items-end gap-2.5 pl-0.5 text-[#1e4691]">
        <TopTab active className="h-[22px] w-[83px]">Hasta Bazında</TopTab>
        <TopTab className="h-[22px] w-[78px] text-left">Rapor Bazında</TopTab>
        <TopTab className="h-[22px]">Test Bazında</TopTab>
      </div>
      <div className="flex min-h-0 flex-1 gap-0.5 rounded-[3px] border border-[#8fb4e8] bg-[#f2f7ff] pt-[3px] pr-1 pb-1">
        <button className="h-[34px] w-[17px] shrink-0 border border-[#f4c070] bg-[#ffeccc] text-black">D</button>
        <div className="flex min-w-0 flex-1 flex-col gap-[5px] text-black">
          <table className="w-full table-fixed border-collapse border-t border-l border-[#909090] bg-white text-left">
            <thead>
              <tr className="h-[22px] bg-linear-to-b from-white to-[#f2f2f2]">
                <th aria-label="Seçim" className={gutter} />
                <th className="border-r border-b border-[#808080] p-0 pl-0.5 font-normal">Durum</th>
                <th className="w-12 border-r border-b border-[#808080] p-0 pr-0.5 text-right font-normal">Adet</th>
              </tr>
            </thead>
            <tbody>
              {STATUS_ROWS.map((r, i) => (
                <tr key={r.name} className="h-[21px]" onClick={() => setSelected(i)}>
                  <td className={gutter}>{selected === i && <Triangle dir="right" className="size-2.5" />}</td>
                  <td className={clsx("border-r border-b border-[#b8b8b8] p-0 pl-[3px]", selected === i && "bg-[#d8d8d8]")}>{r.name}</td>
                  <td className="border-r border-b border-[#b8b8b8] p-0 pr-1 text-right">{r.count}</td>
                </tr>
              ))}
            </tbody>
          </table>
          <div className="flex min-h-0 flex-1 border-t border-l border-[#909090] bg-white">
            <div className="flex min-w-0 flex-1 flex-col">
              <div className="flex h-[27px] shrink-0 items-center border-r border-b border-[#808080] bg-[#f7f7f7] pl-[3px]">
                <input aria-label="Ara" placeholder="Search..." className="h-5 w-[244px] border border-[#808080] bg-white px-0.5 italic outline-none placeholder:text-[#b4b4b4]" />
                <button aria-label="Kapat" className="ml-2.5">
                  <Svg box="0 0 8 8" className="size-2"><path stroke="#333" strokeWidth="1.500" d="M.5.5l7 7M7.500.5l-7 7" /></Svg>
                </button>
                <button aria-label="Sonraki" className="ml-[18px]">
                  <Svg box="0 0 8 8" className="size-2"><path fill="#333" d="M3 0h2v4h3L4 8 0 4h3z" /></Svg>
                </button>
                <button aria-label="Önceki" className="ml-[18px]">
                  <Svg box="0 0 8 8" className="size-2"><path fill="#333" d="M3 8h2V4h3L4 0 0 4h3z" /></Svg>
                </button>
              </div>
              <table className="w-full table-fixed border-collapse text-left whitespace-nowrap">
                <thead>
                  <tr className="h-[21px] bg-linear-to-b from-white to-[#f2f2f2]">
                    <th aria-label="Seçim" className={gutter}><Triangle className="ml-px size-2" /></th>
                    <th className="w-[118px] border-r border-b border-[#808080] p-0 px-0.5 font-normal">
                      <span className="flex items-center justify-between pr-1">
                        Adı
                        <Svg box="0 0 8 8" className="size-2"><path stroke="#777" d="M.5.500h7L4 7.500z" /></Svg>
                      </span>
                    </th>
                    <th className="w-[126px] border-r border-b border-[#808080] p-0 pl-0.5 font-normal">Soyadı</th>
                    <th className="border-b border-[#808080] p-0 pl-0.5 font-normal">Kurum</th>
                  </tr>
                </thead>
                <tbody>
                  <tr className="h-[21px] bg-[#d8e9ff]">
                    <td className={gutter}><Triangle dir="right" className="size-2.5" /></td>
                    <td className="border-r border-b border-[#b8b8b8] p-0 pl-0.5">Deneme</td>
                    <td className="border-r border-b border-[#b8b8b8] bg-[#c4dffe] p-0 pl-0.5">614</td>
                    <td className="overflow-hidden border-b border-[#b8b8b8] p-0 pl-0.5">1- SOSYAL GÜ</td>
                  </tr>
                  <tr className="h-[21px]">
                    <td className={gutter} />
                    <td className="border-r border-b border-[#b8b8b8] p-0 pl-0.5">Deneme</td>
                    <td className="border-r border-b border-[#b8b8b8] p-0 pl-0.5">Hastası</td>
                    <td className="border-b border-[#b8b8b8] p-0" />
                  </tr>
                </tbody>
              </table>
              <div className="flex-1" />
              <div className="flex h-[22px] shrink-0 items-stretch border-y border-[#808080] bg-[#f5f5f5] leading-5">
                <span className="w-3 border-r border-[#808080]" />
                <span className="w-[118px] border-r border-[#808080] pr-[3px] text-right">Toplam</span>
                <span className="w-[126px] border-r border-[#808080] pl-0.5">2</span>
              </div>
              <div className="flex h-[17px] shrink-0 items-center bg-[#f0f0f0]">
                <div className="flex h-full w-16 items-center justify-around border-r border-[#aaa] bg-[#fafafa] text-[#333]">
                  <button aria-label="İlk" className="flex items-center"><span className="h-2 w-px bg-[#333]" /><Triangle dir="left" /></button>
                  <button aria-label="Geri"><Triangle dir="left" /></button>
                  <button aria-label="İleri"><Triangle dir="right" /></button>
                  <button aria-label="Son" className="flex items-center"><Triangle dir="right" /><span className="h-2 w-px bg-[#333]" /></button>
                </div>
                <Scroller dir="row" thumb="h-full w-[52px]" className="flex-1" />
              </div>
            </div>
            <Scroller thumb="h-[67%] w-full" className="mb-[17px]" />
          </div>
        </div>
      </div>
      <div className="flex h-[33px] shrink-0 items-center gap-1 bg-[#b9d1f0] pr-1 text-black">
        <button aria-label="Tümünü işaretle" className="flex h-[27px] w-[29px] items-center justify-center border border-[#98b9e6] bg-[#c4d9f4]">
          <Svg box="0 0 16 16" className="size-4">
            <path stroke="#5a5a5a" strokeWidth="1.500" d="M12 1H1v14h13V9" />
            <path stroke="#5a5a5a" strokeWidth="2" d="M4 7l4 4 7-8" />
          </Svg>
        </button>
        <button className="h-[27px] w-[59px] border border-[#98b9e6] bg-[#c9dcf6]">Listeyi ...</button>
        <span className="flex-1" />
        <button aria-label="Liste görünümü" className="flex h-[27px] w-[29px] items-center justify-center border border-[#98b9e6] bg-[#c4d9f4]">
          <Svg box="0 0 14 14" className="size-3.5">
            <path fill="#5a5a5a" d="M0 0h3v3H0zM0 6h3v3H0zM0 11h3v3H0zM5 1h9v1H5zM5 7h9v1H5zM5 12h9v1H5z" />
          </Svg>
        </button>
        <button aria-label="Menü" className="flex h-[27px] w-[29px] items-center justify-center border border-[#98b9e6] bg-[#c4d9f4]">
          <BarsIcon className="size-[18px]" />
        </button>
      </div>
    </div>
  );
}

function Results() {
  return (
    <div className="flex w-[337px] shrink-0 flex-col border-r-2 border-[#a0a4ac] bg-[#f2f7ff]">
      <div className="flex h-5 items-center bg-[#dce8f7] text-[#5c5c5c]">
        <span className="w-[237px] pl-1.5">Kan Sayımı</span>
        <span>Referans Aralığı</span>
      </div>
      <div className="flex flex-1 flex-col gap-px pt-[7px] text-black">
        {TESTS.map((t) => (
          <div key={t.name} className="flex h-[23px]">
            <label
              htmlFor={"t-" + t.name}
              className="w-[118px] text-right font-['Liberation_Sans',Arial,sans-serif] text-xs leading-5"
            >
              {t.name}
            </label>
            <input
              id={"t-" + t.name}
              defaultValue={t.value}
              className="ml-4 w-24 border border-[#b5cff2] bg-white pr-[3px] pb-0.5 text-right font-['Liberation_Sans',Arial,sans-serif] text-xs outline-none"
            />
            <span className="ml-3.5 leading-[25px]">{t.range}</span>
          </div>
        ))}
      </div>
      <div className="flex h-6 shrink-0 items-center justify-end bg-[#cddefb] text-black">
        <label className="mr-3.5 flex items-center gap-[3px]">
          <input type="checkbox" className="size-[13px] appearance-none border border-[#222] bg-white checked:bg-[#333]" />
          Tek. Onay
        </label>
        <label className="mr-[37px] flex items-center gap-[3px]">
          <input type="checkbox" className="size-[13px] appearance-none border border-[#222] bg-white checked:bg-[#333]" />
          Uzm. Onay
        </label>
        <button className="mr-px h-[18px] w-[21px] border border-[#7fa6dc] bg-[#c2d8f4] leading-none">R</button>
      </div>
    </div>
  );
}

function Notes() {
  return (
    <div className="flex min-w-0 flex-1 flex-col bg-[#bedaff]">
      <label htmlFor="morph" className="flex h-5 shrink-0 items-center bg-[#dce8f7] pl-[7px] text-[#5c5c5c]">Hücre Morfolojisi</label>
      <textarea id="morph" className="mt-0.5 mr-[5px] ml-0.5 h-[83px] shrink-0 resize-none rounded-[3px] border border-[#8fb4e8] bg-white p-1 outline-none" />
      <div className="flex h-[27px] shrink-0 pl-1.5">
        <BottomTab active className="h-[22px] w-[69px] pl-2">Türkçe</BottomTab>
        <BottomTab className="ml-5 h-[22px]">İngilizce</BottomTab>
      </div>
      <label htmlFor="notes" className="flex h-5 shrink-0 items-center bg-[#dce8f7] pl-[7px] text-[#5c5c5c]">Notlar</label>
      <div className="mt-0.5 mr-[5px] ml-0.5 flex min-h-0 flex-1 flex-col overflow-hidden rounded-[3px] border border-[#8fb4e8]">
        <textarea id="notes" className="min-h-0 flex-1 resize-none border border-[#b8d4f6] bg-white p-1 outline-none" />
        <p className="flex h-[22px] shrink-0 items-center bg-[#e8f0fb] pl-1.5 text-[#a3c0e6]">Raporda çıkmasını istediğiniz notlar</p>
      </div>
      <div className="flex h-[27px] shrink-0 pl-1.5">
        <BottomTab active className="h-[21px] w-[99px] pl-1">Türkçe</BottomTab>
        <BottomTab className="ml-[35px] h-[21px]">İngilizce</BottomTab>
      </div>
    </div>
  );
}

const green = "border border-[#008a00] bg-linear-to-b from-[#00b400] via-[#009000] to-[#00786a] text-white";

function LabPanel() {
  return (
    <div className="flex min-w-0 flex-1 flex-col bg-[#bedaff] pr-px pl-[3px]">
      <div className="flex h-[27px] shrink-0 items-end gap-2.5 text-[13px] text-[#0000ff]">
        <TopTab active className="h-[23px] w-[77px] from-[#f2f2f2] to-white">Kan Sayısı</TopTab>
        <TopTab className="h-[23px]">Biyokimya</TopTab>
        <TopTab className="ml-2.5 h-[23px]">İdrar</TopTab>
      </div>
      <div className="flex h-[37px] shrink-0 items-center border-t border-[#8fb4e8] bg-[#b0cde9] pl-[5px]">
        <button disabled className="h-[25px] w-[73px] border border-[#a4c6ea] bg-[#adc9ec] text-[#7e8ba0]">Düzelt F3</button>
        <button className={clsx("ml-1 h-[25px] w-[79px]", green)}>Kaydet F2</button>
        <button className="ml-1 h-[25px] w-[69px] border border-[#8a0000] bg-linear-to-b from-[#ff6a38] via-[#900000] to-[#ff6a38] text-white">
          Vazgeç
        </button>
        <button disabled className="ml-[22px] h-[25px] w-[78px] border border-[#a4c6ea] bg-[#adc9ec] text-[#7e8ba0]">Yazdır F4</button>
        <button aria-label="Yazdırma seçenekleri" className="flex h-[25px] w-[23px] items-center justify-center border border-[#a4c6ea] bg-[#adc9ec] text-[#555]">
          <Triangle />
        </button>
        <span className="flex-1" />
        <button className="h-[25px] w-[84px] border border-[#7fa6dc] bg-[#c9dcf4] text-black">Detay Bilgiler</button>
        <button aria-label="Önizleme" className="mr-[3px] ml-[3px] flex h-[25px] w-[31px] items-center justify-center border border-[#7fa6dc] bg-[#c9dcf4]">
          <Svg box="0 0 16 16" className="size-4">
            <path stroke="#5a5a5a" d="M6 14.500H1.500V.5h7l3 3V6" />
            <circle cx="9.500" cy="9.500" r="3" stroke="#5a5a5a" strokeWidth="1.300" />
            <path stroke="#5a5a5a" strokeWidth="2" d="M12 12l3 3" />
          </Svg>
        </button>
      </div>
      <div className="flex h-[27px] shrink-0 items-end pl-[5px] text-[#1e4691]">
        <TopTab active className="h-[22px] w-[94px]">Test Sonuçları</TopTab>
        <TopTab className="ml-4 h-[22px] w-[101px] text-left">Doktora Notlar</TopTab>
        <TopTab className="h-[22px] w-[110px] text-left">Normal Değerler</TopTab>
        <TopTab className="h-[22px]">Eski Değerler</TopTab>
      </div>
      <div className="flex min-h-0 flex-1 border border-[#8fb4e8] pt-px">
        <Results />
        <Notes />
      </div>
      <div className="mt-[3px] flex h-[34px] shrink-0 items-center bg-[#b0cde9] pl-1 text-black">
        <span className="w-[55px]">Tek. Onay</span>
        <button className={clsx("h-[25px] w-[42px]", green)}>Hepsi</button>
        <button className="ml-px h-[25px] w-[45px] border border-[#8c9ca0] bg-[#dfe3e3]">Hiçbiri</button>
        <span className="ml-3.5 w-16">Uzm. Onay</span>
        <button className={clsx("h-[25px] w-[42px]", green)}>Hepsi</button>
        <button className="h-[25px] w-[45px] border border-[#8c9ca0] bg-[#dfe3e3]">Hiçbiri</button>
      </div>
      <div className="h-[3px] shrink-0 border-t border-[#8fb4e8]" />
    </div>
  );
}

function ToolStrip() {
  const box = "flex h-7 w-[29px] items-center justify-center border border-[#98b9e6] bg-[#c5d9f2]";
  return (
    <aside className="flex w-[33px] shrink-0 flex-col items-center bg-[#d6def2] pt-0.5 pb-1.5">
      <div className="flex flex-col items-center gap-[3px]">
        <button aria-label="Pencereyi büyüt" className="mb-px flex h-[25px] w-[26px] items-center justify-center border border-[#b8c0c4] bg-[#d3dbe0]">
          <WindowArrow out />
        </button>
        <button aria-label="Muayene" className={box}>
          <Svg>
            <path stroke="#111" strokeWidth="2" d="M14 1l-2 1c0 5 2 8 5 8s6-3 6-8l-2-1M17 10v6c0 4-1 6-4 6s-3-2-3-6 0-7-3-7-3 3-3 8" />
            <circle cx="4" cy="19.500" r="2.500" stroke="#111" strokeWidth="2" />
          </Svg>
        </button>
        <button aria-label="Liste" className={box}><ListIcon /></button>
        <button aria-label="Yataklar" className={box}><BedIcon dark /></button>
      </div>
      <div className="flex-1" />
      <div className="flex flex-col items-center gap-0.5">
        <button aria-label="Uygulamalar" className="mb-0.5 flex h-6 w-[27px] items-center justify-center border border-[#a8c8f0] bg-[#b9d3f2]">
          <Svg box="0 0 16 16" className="size-4">
            <path fill="#4a88a0" d="M0 0h4v4H0zM6 0h4v4H6zM12 0h4v4h-4zM0 6h4v4H0zM6 6h4v4H6zM12 6h4v4h-4zM0 12h4v4H0zM6 12h4v4H6zM12 12h4v4h-4z" />
          </Svg>
        </button>
        <button aria-label="Mesajlar" className="flex h-6 w-[27px] items-center justify-center border border-[#98b9e6] bg-[#d4e4f6]">
          <Svg box="0 0 20 20" className="size-5">
            <rect width="20" height="20" rx="1" fill="#0098b8" />
            <path stroke="#fff" strokeWidth="1.600" d="M0 4l10 10L20 4M0 17l7-6M20 17l-7-6" />
          </Svg>
        </button>
        <button aria-label="Sohbet" className="flex h-6 w-[27px] items-center justify-center border border-[#98b9e6] bg-[#d4e4f6]">
          <Svg box="0 0 20 20" className="size-5">
            <path stroke="#1878b0" strokeWidth="1.500" d="M1 19v-9a9 9 0 1 1 9 9z" />
            <path fill="#1878b0" d="M6 9h2v2H6zM9 9h2v2H9zM12 9h2v2h-2z" />
          </Svg>
        </button>
        <button aria-label="Web" className="flex h-6 w-[27px] items-center justify-center border border-[#98b9e6] bg-[#d4e4f6]">
          <Svg box="0 0 20 20" className="size-5">
            <circle cx="10" cy="10" r="10" fill="#4478c8" />
            <path stroke="#c8dcf4" strokeWidth="1.200" d="M1 7c6-3 12-3 18 1M0 13c6-3 13-3 19 1M7 0c-4 6-3 13 0 20M13 0c4 7 4 13-1 20M3 3c6 1 12 5 15 13" />
          </Svg>
        </button>
      </div>
    </aside>
  );
}

export default function App() {
  return (
    <div className="flex h-screen min-h-[760px] flex-col bg-[#d9d9d9] pt-[23px] pb-[17px] font-['Open_Sans','Noto_Sans',sans-serif] text-[11px] leading-4">
      <TitleBar />
      <PatientBar />
      <Ribbon />
      <div className="flex min-h-0 flex-1">
        <Sidebar />
        <div className="flex min-w-0 flex-1 flex-col">
          <div className="flex min-h-0 flex-1">
            <main className="relative flex min-w-0 flex-1 flex-col border-l-[3px] border-[#8fb4e8] bg-[#bedaff]">
              <ModuleBar />
              <div className="flex min-h-0 flex-1">
                <PatientList />
                <div className="flex w-1.5 shrink-0 items-center justify-center border-r border-[#aab4c4] bg-[#d4dae6]">
                  <span className="h-[34px] border-l-2 border-dotted border-black" />
                </div>
                <LabPanel />
              </div>
              {/* active window frame */}
              <span className="pointer-events-none absolute top-0 right-0 -left-[3px] h-[3px] bg-[#ff0000]" />
              <span className="pointer-events-none absolute top-0 -left-[3px] h-[49%] w-[3px] bg-[#ff3030]" />
              <span className="pointer-events-none absolute right-[3px] bottom-1 h-[49%] w-[3px] bg-[#ff3030]" />
              <span className="pointer-events-none absolute right-[3px] bottom-1 h-[3px] w-[21%] bg-[#ff3030]" />
            </main>
            <ToolStrip />
          </div>
          <div className="flex h-[26px] shrink-0 items-center gap-px border-t-2 border-[#a0a0a0] bg-[#ff1818] pr-1 pl-[5px] text-white shadow-[inset_0_2px_0_#fff]">
            <span className="flex-1 pt-1 text-xs">Hatırlatmalarınız Var</span>
            {["M3 12h12v3H3z", "M3 8h12v8H3zM5 11v3h8v-3z", "M3 3h12v13H3zM5 6v8h8V6z"].map((d, i) => (
              <button
                key={d}
                aria-label={["Simge", "Yarım", "Tam"][i] + " boyut"}
                className="mt-0.5 flex h-5 w-[22px] items-center justify-center border border-[#a80000] bg-linear-to-b from-[#ff7070] via-[#ff2020] to-[#ff5050]"
              >
                <Svg box="0 0 18 18" className="size-[18px]">
                  <path fill="#8a0a50" fillRule="evenodd" d={d} />
                </Svg>
              </button>
            ))}
          </div>
        </div>
      </div>
      <footer className="flex h-[19px] shrink-0 items-center bg-[#404040] pl-2 font-['Liberation_Sans',Arial,sans-serif] text-xs text-[#8a8a8a]">
        <span className="w-[67px]">v.1027.01</span>
        <span className="w-[146px]">Test Kullanıcısı</span>
        <span className="w-[285px]">S: Ana Bilgisayar - Test (193.138.175.51:9022)</span>
        <span>C: URUNGELISTIR3 (10.242.2.3)</span>
      </footer>
    </div>
  );
}
